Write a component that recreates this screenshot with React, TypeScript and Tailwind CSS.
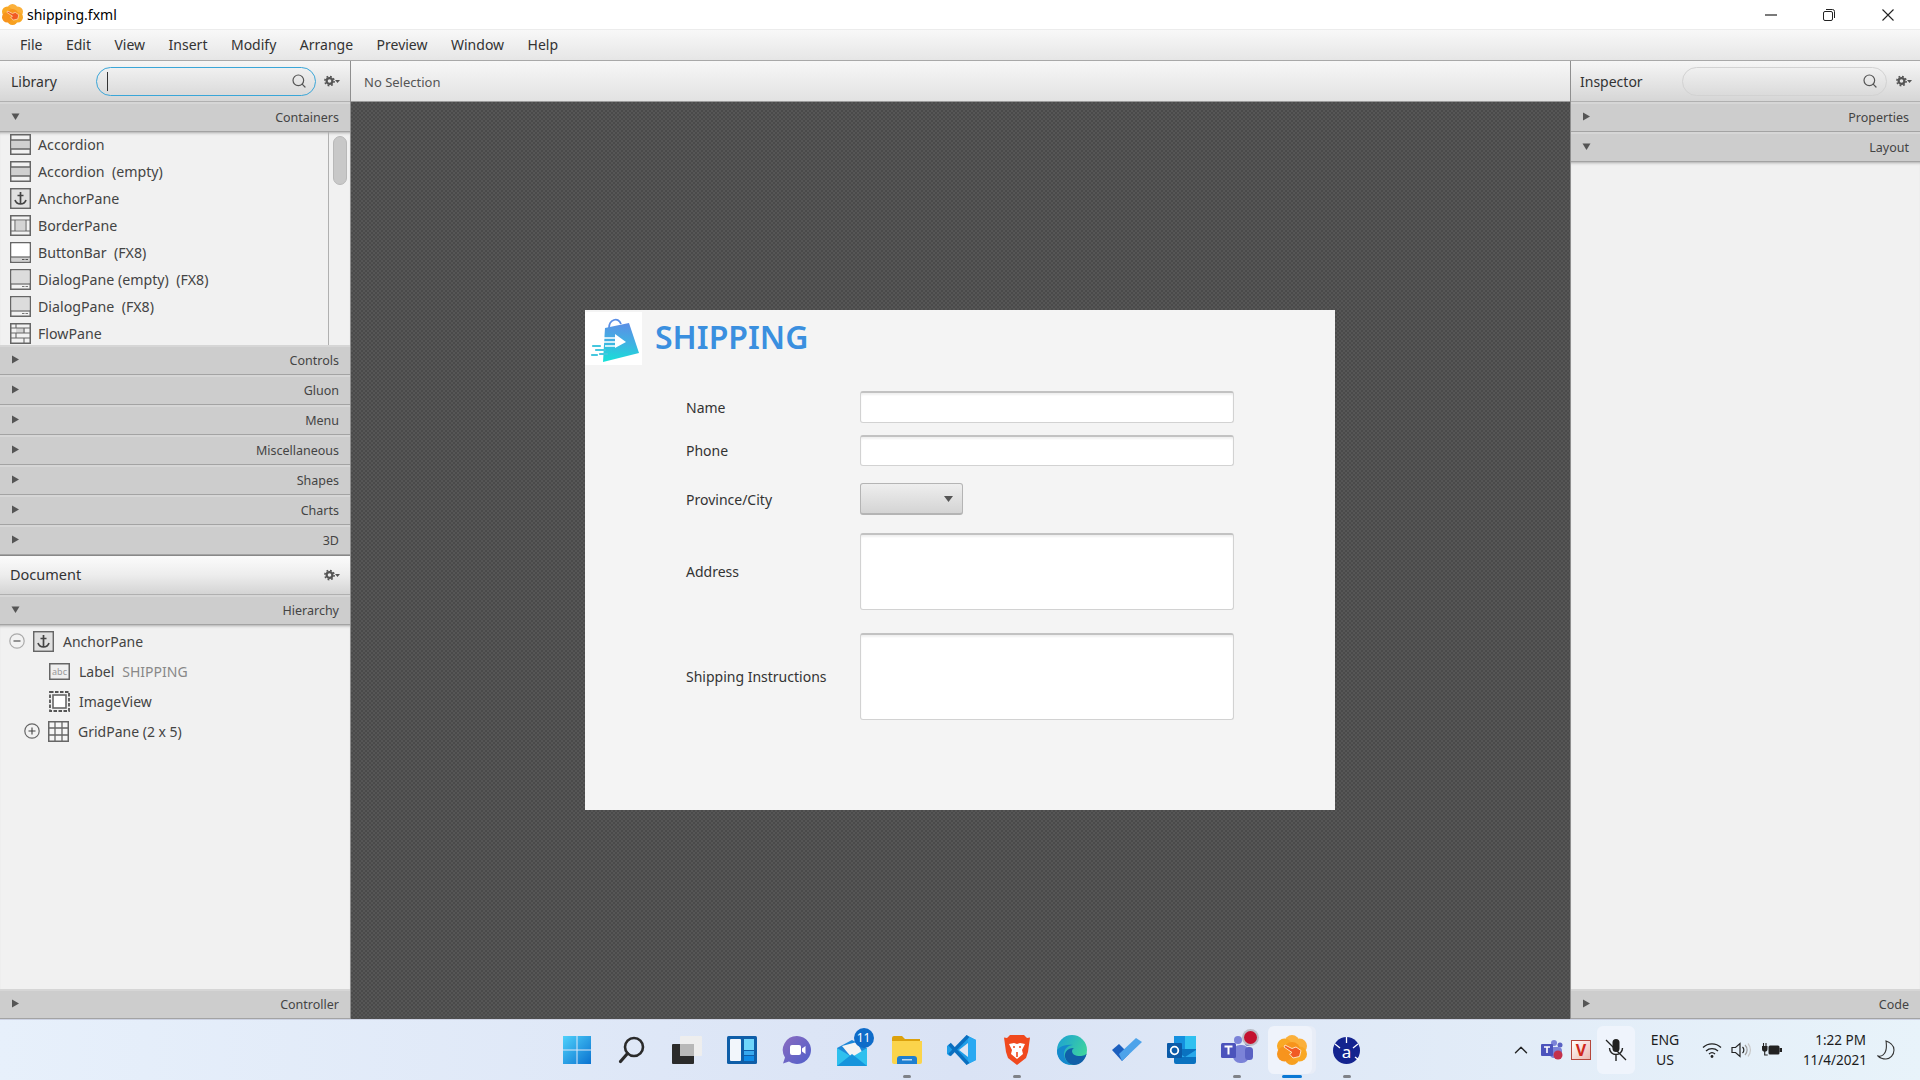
import React from "react";
import { ChevronUp, Search } from "lucide-react";

const font = "font-['Noto_Sans','Open_Sans',sans-serif]";

const Gear = () => (
  <svg width="16" height="12" viewBox="0 0 16 12" className="shrink-0">
    <circle cx="5.5" cy="6" r="2.9" fill="none" stroke="#555" strokeWidth="2.2" />
    <circle cx="5.5" cy="6" r="4.6" fill="none" stroke="#555" strokeWidth="1.6" strokeDasharray="1.8 1.8" />
    <path d="M11 5h5l-2.5 3z" fill="#555" />
  </svg>
);

const Arrow = ({ open }: { open?: boolean }) => (
  <svg width="9" height="9" viewBox="0 0 9 9" className="shrink-0">
    {open ? <path d="M0.5 1.5h8L4.5 8z" fill="#555" /> : <path d="M1 0.5v8L8 4.5z" fill="#555" />}
  </svg>
);

const Section = ({ title, open }: { title: string; open?: boolean }) => (
  <div className="h-[30px] shrink-0 flex items-center justify-between pl-[11px] pr-[11px] bg-[#cdcdcd] border-t-2 border-t-[#d6d6d6] border-b border-b-[#a3a3a3] text-[12.5px] text-[#444]">
    <div className="-mt-[2px]"><Arrow open={open} /></div>
    <span className="pt-[2px]">{title}</span>
  </div>
);

const Frame = ({ children }: { children?: React.ReactNode }) => (
  <svg width="21" height="21" viewBox="0 0 21 21" className="shrink-0">
    <rect x="0.75" y="0.75" width="19.5" height="19.5" fill="#f2f2f2" stroke="#666" strokeWidth="1.5" />
    {children}
  </svg>
);

const AccordionIcon = () => (
  <Frame>
    <rect x="1.5" y="6" width="18" height="9" fill="#d0d0d0" />
    <path d="M1 6h19M1 15h19" stroke="#666" strokeWidth="1.3" />
  </Frame>
);
const AnchorIcon = () => (
  <Frame>
    <rect x="2" y="2" width="17" height="17" fill="#e0e0e0" />
    <path d="M10.5 4v12M7.5 7.5h6M5 12c1 3 3 4 5.5 4s4.5-1 5.5-4" fill="none" stroke="#444" strokeWidth="1.7" />
  </Frame>
);
const BorderIcon = () => (
  <Frame>
    <rect x="6" y="6" width="9" height="9" fill="#d4d4d4" />
    <path d="M1 5h19M1 16h19M5 5v11M16 5v11" stroke="#666" strokeWidth="1.1" />
  </Frame>
);
const ButtonBarIcon = () => (
  <Frame>
    <rect x="1.5" y="1.5" width="18" height="13" fill="#fff" />
    <rect x="1.5" y="15" width="18" height="4.5" fill="#d0d0d0" />
    <path d="M1 15h19" stroke="#666" strokeWidth="1.2" />
    <path d="M12 17.5h2.5M15.5 17.5H18" stroke="#555" strokeWidth="1.2" />
  </Frame>
);
const DialogIcon = () => (
  <Frame>
    <rect x="1.5" y="1.5" width="18" height="13" fill="#dcdcdc" />
    <path d="M1 15h19" stroke="#666" strokeWidth="1.2" />
    <path d="M12 17.5h2.5M15.5 17.5H18" stroke="#777" strokeWidth="1.2" />
  </Frame>
);
const FlowIcon = () => (
  <Frame>
    <rect x="6" y="5" width="9" height="5" fill="#d4d4d4" />
    <path d="M1 5h19M1 10h19M1 15h19M6 1v4M14 5v5M6 10v5M14 15v5" stroke="#666" strokeWidth="1.1" />
  </Frame>
);

const libraryItems: [React.ReactNode, string][] = [
  [<AccordionIcon />, "Accordion"],
  [<AccordionIcon />, "Accordion\u00a0\u00a0(empty)"],
  [<AnchorIcon />, "AnchorPane"],
  [<BorderIcon />, "BorderPane"],
  [<ButtonBarIcon />, "ButtonBar\u00a0\u00a0(FX8)"],
  [<DialogIcon />, "DialogPane (empty)\u00a0\u00a0(FX8)"],
  [<DialogIcon />, "DialogPane\u00a0\u00a0(FX8)"],
  [<FlowIcon />, "FlowPane"],
];

const LabelIcon = () => (
  <svg width="21" height="17" viewBox="0 0 21 17" className="shrink-0">
    <rect x="0.75" y="0.75" width="19.5" height="15.5" fill="#efefef" stroke="#666" strokeWidth="1.5" />
    <text x="10.5" y="12" textAnchor="middle" fontSize="9" fill="#999" fontFamily="Noto Sans">abc</text>
  </svg>
);
const ImageIcon = () => (
  <svg width="21" height="21" viewBox="0 0 21 21" className="shrink-0">
    <rect x="1" y="1" width="19" height="19" fill="none" stroke="#555" strokeWidth="1.8" strokeDasharray="3.5 1.5" />
    <rect x="4" y="4" width="13" height="13" fill="#fff" stroke="#666" strokeWidth="1.6" />
  </svg>
);
const GridIcon = () => (
  <svg width="21" height="21" viewBox="0 0 21 21" className="shrink-0">
    <rect x="0.75" y="0.75" width="19.5" height="19.5" fill="#f6f6f6" stroke="#666" strokeWidth="1.5" />
    <path d="M7 1v19M14 1v19M1 7h19M1 14h19" stroke="#666" strokeWidth="1.3" />
  </svg>
);
const TreeToggle = ({ plus }: { plus?: boolean }) => (
  <svg width="16" height="16" viewBox="0 0 16 16" className="shrink-0">
    <circle cx="8" cy="8" r="7.2" fill="#f2f2f2" stroke={plus ? "#666" : "#aaa"} strokeWidth="1.2" />
    <path d={plus ? "M4.5 8h7M8 4.5v7" : "M4.5 8h7"} stroke="#444" strokeWidth="1.1" />
  </svg>
);

const SearchField = ({ active }: { active?: boolean }) => (
  <div
    className={
      active
        ? "h-[29px] flex-1 flex items-center justify-between rounded-full border border-[#3aa6d8] pl-[10px] pr-[8px]"
        : "h-[29px] flex-1 flex items-center justify-end rounded-full border border-[#d2d2d2] pr-[8px]"
    }
  >
    {active && <div className="w-px h-[19px] bg-[#333]" />}
    <Search size={16} strokeWidth={1.8} className="text-[#555]" />
  </div>
);

const ShippingLogo = () => (
  <svg width="57" height="53" viewBox="0 0 57 53" className="shrink-0 bg-white">
    <defs>
      <linearGradient id="bag" x1="0.5" y1="0" x2="0.4" y2="1">
        <stop offset="0" stopColor="#5b8fe6" />
        <stop offset="0.5" stopColor="#3fb2e2" />
        <stop offset="1" stopColor="#17e0d8" />
      </linearGradient>
    </defs>
    <path d="M24 16C24 8 33 4 36 12" fill="none" stroke="#5b8fe6" strokeWidth="1.8" />
    <path d="M20 16L44 11L54 41L18 50Z" fill="url(#bag)" />
    <path d="M14 26H33M17 30H30M20 34H30" stroke="#fff" strokeWidth="1.6" />
    <path d="M30 22L41 30L30 36Z" fill="#fff" />
    <path d="M8 34H15M11 38H20M7 43H12M15 42H22" stroke="#45c7de" strokeWidth="2.2" strokeLinecap="round" />
  </svg>
);

const SceneBuilderIcon = ({ size }: { size: number }) => (
  <svg width={size} height={size} viewBox="0 0 30 30" className="shrink-0">
    <circle cx="15" cy="7.5" r="7.5" fill="#fbb03b" />
    <circle cx="15" cy="22.5" r="7.5" fill="#f7a020" />
    <circle cx="7.5" cy="11" r="7.5" fill="#f9a825" />
    <circle cx="22.5" cy="11" r="7.5" fill="#fbb03b" />
    <circle cx="7.5" cy="19" r="7.5" fill="#f7941d" />
    <circle cx="22.5" cy="19" r="7.5" fill="#f9a825" />
    <circle cx="15" cy="15" r="8" fill="#f7941d" />
    <path d="M8 10L15 13.5L19 12L24 15.5L22.5 21.5L16 23L12.5 19L15 17.5L7 12Z" fill="#f15a24" stroke="#fde3c0" strokeWidth="1" strokeLinejoin="round" />
  </svg>
);

const Pip = ({ active }: { active?: boolean }) => (
  <div className={active ? "absolute bottom-[2px] left-1/2 -translate-x-1/2 w-5 h-[3px] rounded-full bg-[#0a78d4]" : "absolute bottom-[2px] left-1/2 -translate-x-1/2 w-2 h-[3px] rounded-full bg-[#7f8288]"} />
);

const TaskItem = ({ children, running, active }: { children: React.ReactNode; running?: boolean; active?: boolean }) => (
  <div className="relative w-[55px] h-[60px] flex items-center justify-center">
    {active && <div className="absolute left-[4px] top-[6px] w-[44px] h-[48px] rounded-md bg-[#eff3fb] shadow-[4px_0_0_#e8edf7]" />}
    <div className="relative flex items-center justify-center">{children}</div>
    {running && <Pip active={active} />}
  </div>
);

const taskIcons: { icon: React.ReactNode; running?: boolean; active?: boolean }[] = [
  {
    icon: (
      <svg width="30" height="30" viewBox="0 0 30 30">
        <defs>
          <linearGradient id="win" x1="0" y1="0" x2="1" y2="1">
            <stop offset="0" stopColor="#4fd1fb" />
            <stop offset="1" stopColor="#0a72d0" />
          </linearGradient>
        </defs>
        <path d="M1 1h13.5v13.5H1zM15.5 1H29v13.5H15.5zM1 15.5h13.5V29H1zM15.5 15.5H29V29H15.5z" fill="url(#win)" />
      </svg>
    ),
  },
  {
    icon: (
      <svg width="28" height="28" viewBox="0 0 28 28" fill="none">
        <circle cx="16" cy="11" r="9" stroke="#2a2a2a" strokeWidth="2.6" />
        <path d="M9.5 17.5L2.5 25.5" stroke="#2a2a2a" strokeWidth="3.2" strokeLinecap="round" />
      </svg>
    ),
  },
  {
    icon: (
      <svg width="30" height="28" viewBox="0 0 30 28">
        <rect x="8" y="0" width="22" height="20" rx="1" fill="#eeeeee" />
        <rect x="0" y="8" width="22" height="20" rx="1" fill="#2b2b2b" />
        <rect x="8" y="8" width="14" height="12" fill="#b8b8b8" />
      </svg>
    ),
  },
  {
    icon: (
      <svg width="30" height="28" viewBox="0 0 30 28">
        <rect width="30" height="28" rx="1.5" fill="#0f5ea8" />
        <rect x="3" y="3" width="11" height="22" rx="1" fill="#f2f6fb" />
        <rect x="17" y="3" width="10" height="11" fill="#6fd6fb" />
        <rect x="17" y="15" width="10" height="4" fill="#38a9ee" />
        <rect x="17" y="20" width="10" height="5" fill="#0f8be6" />
      </svg>
    ),
  },
  {
    icon: (
      <svg width="30" height="30" viewBox="0 0 30 30">
        <defs>
          <linearGradient id="chat" x1="0" y1="0" x2="1" y2="1">
            <stop offset="0" stopColor="#8c6cc0" />
            <stop offset="1" stopColor="#4f5fca" />
          </linearGradient>
        </defs>
        <path d="M15 1a14 14 0 1 1-8 25.5L1 28.5l2-6A14 14 0 0 1 15 1z" fill="url(#chat)" />
        <rect x="8" y="10" width="11" height="10" rx="2" fill="#fff" />
        <path d="M20 13.5l3.5-2.5v8L20 16.5z" fill="#fff" />
      </svg>
    ),
  },
  {
    icon: (
      <div className="relative w-[30px] h-[26px] mt-[6px]">
        <svg width="30" height="26" viewBox="0 0 30 26">
          <path d="M0 8L15 0L30 8V26H0Z" fill="#1e88d8" />
          <path d="M5 6L20 2L25 12L15 18Z" fill="#f4f4f4" />
          <path d="M0 8L15 17L30 8V26H0Z" fill="#2fc0ee" />
          <path d="M0 26L15 14L30 26Z" fill="#1694dc" />
        </svg>
        <div className="absolute -top-[12px] left-[17px] w-5 h-5 rounded-full bg-[#0f6cc9] text-white text-[12px] leading-5 text-center">11</div>
      </div>
    ),
  },
  {
    icon: (
      <svg width="30" height="28" viewBox="0 0 30 28">
        <path d="M0 2a2 2 0 0 1 2-2h8l3 3h15v6H0z" fill="#dca10c" />
        <path d="M0 5h30v21a2 2 0 0 1-2 2H2a2 2 0 0 1-2-2z" fill="#fbd44b" />
        <path d="M5 28v-5a3 3 0 0 1 3-3h14a3 3 0 0 1 3 3v5z" fill="#1f7fd0" />
        <rect x="10" y="23" width="10" height="1.5" fill="#fff" opacity="0.7" />
      </svg>
    ),
    running: true,
  },
  {
    icon: (
      <svg width="30" height="30" viewBox="0 0 30 30">
        <path d="M21 1L29 5V25L21 29L8 16.5L2.5 21L0 19V11L2.5 9L8 13.5Z" fill="#1f9ee8" />
        <path d="M21 8L12 15L21 22Z" fill="#dfe6f4" />
        <path d="M21 1L29 5V25L21 29Z" fill="#2aa9f2" />
        <path d="M21 1L2.5 20" stroke="#0a6fc0" strokeWidth="3.5" />
        <path d="M2.5 9L21 29" stroke="#0a6fc0" strokeWidth="3.5" />
      </svg>
    ),
  },
  {
    icon: (
      <svg width="26" height="30" viewBox="0 0 26 30">
        <path d="M6 0h14l3 3 3-.5L24 17l-2 6-9 7-9-7-2-6L0 2.5 3 3z" fill="#f0491e" />
        <path d="M5 9l5-1 3 1 3-1 5 1-3 6 1 4-6 5-6-5 1-4z" fill="#fff" />
        <path d="M13 17v5M9 12h2M15 12h2" stroke="#f0491e" strokeWidth="1.6" />
      </svg>
    ),
    running: true,
  },
  {
    icon: (
      <svg width="30" height="30" viewBox="0 0 30 30">
        <defs>
          <linearGradient id="edgeA" x1="0" y1="0" x2="1" y2="0.6">
            <stop offset="0" stopColor="#1b9fd6" />
            <stop offset="1" stopColor="#3fd69c" />
          </linearGradient>
        </defs>
        <circle cx="15" cy="15" r="15" fill="url(#edgeA)" />
        <path d="M30 17c0 3-4 4-7 4-5 0-8-2-8-5 0-2 2-3 2-3-7 0-10 5-9 9s4 8 9 8c7 0 12-6 13-13z" fill="#105fa8" />
        <path d="M16 10c-5 0-9 4-9 9 0 5 4 9 8 11C6 30 0 24 0 16 0 14 5 9 16 10z" fill="#1589cd" />
      </svg>
    ),
  },
  {
    icon: (
      <svg width="30" height="24" viewBox="0 0 30 24">
        <path d="M0 12l7-6 10 10-7 7z" fill="#1c5fbf" />
        <path d="M10 23L30 4 24 0 7 16z" fill="#4da3ea" />
      </svg>
    ),
  },
  {
    icon: (
      <svg width="30" height="28" viewBox="0 0 30 28">
        <rect x="7" y="0" width="22" height="14" fill="#1490df" />
        <rect x="18" y="0" width="11" height="14" fill="#2fc0f0" />
        <path d="M7 13h22v13a2 2 0 0 1-2 2H9a2 2 0 0 1-2-2z" fill="#0a72c0" />
        <path d="M7 14l11 7 11-7v7H7z" fill="#28a8ea" />
        <rect x="0" y="7" width="15" height="15" rx="1" fill="#0a5aa8" />
        <circle cx="7.5" cy="14.5" r="3.8" fill="none" stroke="#fff" strokeWidth="1.8" />
      </svg>
    ),
  },
  {
    icon: (
      <div className="relative w-[32px] h-[28px]">
        <svg width="32" height="28" viewBox="0 0 32 28">
          <circle cx="17" cy="4" r="4" fill="#7b83d8" />
          <rect x="12" y="9" width="16" height="18" rx="7" fill="#7b83d8" />
          <circle cx="27" cy="7" r="3" fill="#5a62c3" />
          <rect x="24" y="11" width="8" height="13" rx="3.5" fill="#5a62c3" />
          <rect x="0" y="7" width="15" height="15" rx="1.5" fill="#4b53bc" />
          <path d="M3.5 10.5h8M7.5 10.5v8" stroke="#fff" strokeWidth="2" />
        </svg>
        <div className="absolute -top-[5px] right-[-4px] w-[13px] h-[13px] rounded-full bg-[#c4122f] ring-2 ring-[#b9bcc4]" />
      </div>
    ),
    running: true,
  },
  { icon: <SceneBuilderIcon size={30} />, running: true, active: true },
  {
    icon: (
      <svg width="27" height="27" viewBox="0 0 27 27">
        <circle cx="13.5" cy="13.5" r="13.5" fill="#14248f" />
        <path d="M13.5 0v6M2 7l5 4M25 7l-5 4M22 20l4 3" stroke="#fff" strokeWidth="1.3" />
        <text x="13.5" y="21" textAnchor="middle" fontSize="17" fill="#fff" fontFamily="Noto Sans">a</text>
      </svg>
    ),
    running: true,
  },
];

const Tray = () => (
  <div className="ml-auto flex items-center text-[14px] text-[#1c1c1c]">
    <ChevronUp size={22} strokeWidth={1.5} className="text-[#222]" />
    <svg width="22" height="20" viewBox="0 0 22 20" className="ml-[9px]">
      <circle cx="13" cy="3" r="3" fill="#7b83d8" />
      <circle cx="19" cy="5" r="2.5" fill="#5a62c3" />
      <rect x="9" y="7" width="12" height="11" rx="4" fill="#7b83d8" />
      <rect x="0" y="4" width="12" height="12" rx="1" fill="#4b53bc" />
      <path d="M3 7h6M6 7v6" stroke="#fff" strokeWidth="1.6" />
      <circle cx="17" cy="15" r="4.5" fill="#c4314b" />
    </svg>
    <div className="ml-[8px] w-5 h-5 flex items-center justify-center border border-[#b5473c] bg-gradient-to-br from-[#fff] to-[#e9b9b0] text-[#d0281c] text-[16px] font-bold leading-none">V</div>
    <div className="ml-[6px] w-[38px] h-[48px] rounded-md bg-[#eff4fc] flex items-center justify-center">
      <svg width="22" height="24" viewBox="0 0 22 24" fill="none">
        <rect x="7.5" y="1" width="7" height="13" rx="3.5" fill="#222" />
        <path d="M4.5 10c0 4 3 6.5 6.5 6.5s6.5-2.5 6.5-6.5M11 17v6" stroke="#222" strokeWidth="1.4" />
        <path d="M1 2l20 20" stroke="#222" strokeWidth="1.3" />
      </svg>
    </div>
    <div className="ml-[11px] w-[38px] text-center leading-[20px] text-[14px]">
      <div>ENG</div>
      <div>US</div>
    </div>
    <svg width="20" height="16" viewBox="0 0 20 16" fill="none" className="ml-[18px]">
      <path d="M1 5.5a13 13 0 0 1 18 0M4 9a9 9 0 0 1 12 0M7 12a4.5 4.5 0 0 1 6 0" stroke="#222" strokeWidth="1.3" />
      <circle cx="10" cy="14.5" r="1.4" fill="#222" />
    </svg>
    <svg width="20" height="16" viewBox="0 0 20 16" fill="none" className="ml-[9px]">
      <path d="M1 5.5h3.5L9 1.5v13L4.5 10.5H1z" stroke="#222" strokeWidth="1.2" />
      <path d="M11.5 5a4 4 0 0 1 0 6" stroke="#222" strokeWidth="1.2" />
      <path d="M14 3a7 7 0 0 1 0 10" stroke="#999" strokeWidth="1.2" />
      <path d="M17 1.5a10 10 0 0 1 0 13" stroke="#c8c8c8" strokeWidth="1.2" />
    </svg>
    <svg width="20" height="16" viewBox="0 0 20 16" className="ml-[11px]">
      <path d="M1.5 1v3M4 1v3" stroke="#222" strokeWidth="1.1" />
      <path d="M0 4h5.5v3a2.7 2.7 0 0 1-5.500 0z" fill="#222" />
      <path d="M2.7 9v4h3" stroke="#222" strokeWidth="1.1" fill="none" />
      <rect x="6.5" y="3.5" width="11" height="9" rx="1.5" fill="#222" />
      <rect x="17.5" y="6" width="2.5" height="4" fill="#222" />
    </svg>
    <div className="ml-[9px] w-[76px] text-right leading-[20px] text-[13.5px]">
      <div className="pr-[1px]">1:22 PM</div>
      <div>11/4/2021</div>
    </div>
    <svg width="18" height="20" viewBox="0 0 18 20" fill="none" className="ml-[10px] mr-[25px]">
      <path d="M9 1c3 1 8 4 8 9s-4 9-8 9c-3 0-6-1-8-3 4 1 7-2 8-6 .6-3 .5-6 0-9z" stroke="#333" strokeWidth="1.1" />
    </svg>
  </div>
);

const Field = ({ label, rowClass, children }: { label: string; rowClass: string; children: React.ReactNode }) => (
  <div className={`flex items-center ${rowClass}`}>
    <span className="w-[174px] text-[14px] text-[#333]">{label}</span>
    {children}
  </div>
);

const inputClass =
  "w-[374px] rounded-[3px] bg-white border border-[#d2d2d2] border-t-2 border-t-[#c2c2c2] shadow-[inset_0_2px_2px_#f0f0f0]";

export default function App() {
  return (
    <div className={`w-[1920px] h-[1080px] flex flex-col overflow-hidden bg-white ${font}`}>
      {/* title bar */}
      <div className="h-[29px] shrink-0 flex items-center bg-white pl-[2px]">
        <SceneBuilderIcon size={21} />
        <span className="ml-[4px] text-[14px] text-black">shipping.fxml</span>
        <div className="ml-auto flex items-center">
          <svg width="12" height="2" viewBox="0 0 12 2" className="mr-[46px]"><path d="M0 1h12" stroke="#222" strokeWidth="1.2" /></svg>
          <svg width="12" height="12" viewBox="0 0 12 12" fill="none" className="mr-[47px]">
            <rect x="0.5" y="2.5" width="9" height="9" rx="1.5" stroke="#222" />
            <path d="M3 0.5h6.5a2 2 0 0 1 2 2V9" stroke="#222" />
          </svg>
          <svg width="12" height="12" viewBox="0 0 12 12" className="mr-[26px]"><path d="M0.5 0.5l11 11M11.500 0.5l-11 11" stroke="#222" strokeWidth="1.1" /></svg>
        </div>
      </div>

      {/* menu bar */}
      <div className="h-[32px] shrink-0 flex items-center gap-[23.5px] pl-5 pb-[2px] border-t border-[#ececec] border-b border-b-[#a8a8a8] bg-gradient-to-b from-[#f8f8f8] to-[#e6e6e6] text-[14px] text-[#333]">
        {["File", "Edit", "View", "Insert", "Modify", "Arrange", "Preview", "Window", "Help"].map((m) => (
          <span key={m}>{m}</span>
        ))}
      </div>

      {/* main */}
      <div className="flex-1 min-h-0 flex">
        {/* left column */}
        <div className="w-[351px] shrink-0 flex flex-col bg-[#f1f1f1] border-r border-[#8f8f8f]">
          <div className="h-[41px] shrink-0 flex items-center pl-[11px] pr-[10px] bg-gradient-to-b from-[#f6f6f6] to-[#d6d6d6] border-b border-[#b0b0b0]">
            <span className="w-[85px] text-[14px] text-[#333]">Library</span>
            <SearchField active />
            <div className="ml-[8px]"><Gear /></div>
          </div>
          <Section title="Containers" open />
          <div className="h-[213px] shrink-0 flex overflow-hidden shadow-[inset_0_3px_3px_-2px_#aaaaaa]">
            <div className="flex-1 border-r border-[#b0b0b0]">
              <div className="-mt-px">
                {libraryItems.map(([icon, name], i) => (
                  <div key={i} className="h-[27px] flex items-center pl-[10px] gap-[7px] text-[14.2px] text-[#444] whitespace-pre">
                    {icon}
                    <span>{name}</span>
                  </div>
                ))}
              </div>
            </div>
            <div className="w-[21px] shrink-0 pl-1 pt-1">
              <div className="w-[14px] h-[49px] rounded-full bg-[#c8c8c8] border border-[#b8b8b8]" />
            </div>
          </div>
          {["Controls", "Gluon", "Menu", "Miscellaneous", "Shapes", "Charts", "3D"].map((s) => (
            <Section key={s} title={s} />
          ))}
          <div className="h-[40px] shrink-0 flex items-center justify-between pl-[10px] pr-[10px] bg-gradient-to-b from-[#fbfbfb] via-[#ededed] to-[#d4d4d4] border-t border-[#888] border-b border-b-[#b0b0b0] text-[14.5px] text-[#333]">
            <span>Document</span>
            <Gear />
          </div>
          <Section title="Hierarchy" open />
          <div className="flex-1 min-h-0 pt-px text-[14px] text-[#444] shadow-[inset_0_3px_3px_-2px_#aaaaaa]">
            <div className="h-[30px] flex items-center pl-[9px]">
              <TreeToggle />
              <div className="ml-[8px]"><AnchorIcon /></div>
              <span className="ml-[9px]">AnchorPane</span>
            </div>
            <div className="h-[30px] flex items-center pl-[49px]">
              <LabelIcon />
              <span className="ml-[9px]">Label</span>
              <span className="ml-[8px] text-[#888]">SHIPPING</span>
            </div>
            <div className="h-[30px] flex items-center pl-[49px]">
              <ImageIcon />
              <span className="ml-[9px]">ImageView</span>
            </div>
            <div className="h-[30px] flex items-center pl-[24px]">
              <TreeToggle plus />
              <div className="ml-[8px]"><GridIcon /></div>
              <span className="ml-[9px]">GridPane (2 x 5)</span>
            </div>
          </div>
          <Section title="Controller" />
        </div>

        {/* center */}
        <div className="flex-1 min-w-0 flex flex-col">
          <div className="h-[41px] shrink-0 flex items-center pl-[13px] pt-[3px] bg-gradient-to-b from-[#f7f7f7] to-[#e2e2e2] border-b border-[#9a9a9a] text-[13px] text-[#555]">
            No Selection
          </div>
          <div className="flex-1 min-h-0 flex items-center justify-center pr-px pb-px bg-[repeating-conic-gradient(#4a4a4a_0_25%,#565656_0_50%)] bg-[length:4px_4px]">
            <div className="w-[750px] h-[500px] bg-[#f4f4f4]">
              <div className="flex items-center pt-[2px]">
                <ShippingLogo />
                <span className="ml-[13px] pb-[3px] text-[32px] leading-none font-semibold text-[#3a8fdf]">SHIPPING</span>
              </div>
              <div className="pl-[101px] pt-[26px]">
                <Field label="Name" rowClass="h-[32px]">
                  <div className={`${inputClass} h-[32px]`} />
                </Field>
                <Field label="Phone" rowClass="h-[31px] mt-[12px]">
                  <div className={`${inputClass} h-[31px]`} />
                </Field>
                <Field label="Province/City" rowClass="h-[32px] mt-[17px]">
                  <div className="w-[103px] h-[32px] flex items-center justify-end pr-[9px] rounded-[3px] border border-[#b4b4b4] border-b-2 bg-gradient-to-b from-[#eeeeee] to-[#d4d4d4]">
                    <svg width="9" height="6" viewBox="0 0 9 6"><path d="M0 0h9L4.5 6z" fill="#555" /></svg>
                  </div>
                </Field>
                <Field label="Address" rowClass="h-[77px] mt-[18px]">
                  <div className={`${inputClass} h-[77px]`} />
                </Field>
                <Field label="Shipping Instructions" rowClass="h-[87px] mt-[23px]">
                  <div className={`${inputClass} h-[87px]`} />
                </Field>
              </div>
            </div>
          </div>
        </div>

        {/* right column */}
        <div className="w-[350px] shrink-0 flex flex-col bg-[#f1f1f1] border-l border-[#8f8f8f]">
          <div className="h-[41px] shrink-0 flex items-center pl-[9px] pr-[8px] bg-gradient-to-b from-[#f6f6f6] to-[#d6d6d6] border-b border-[#b0b0b0]">
            <span className="w-[102px] text-[14px] text-[#333]">Inspector</span>
            <SearchField />
            <div className="ml-[9px]"><Gear /></div>
          </div>
          <Section title="Properties" />
          <Section title="Layout" open />
          <div className="flex-1 min-h-0 shadow-[inset_0_3px_3px_-2px_#aaaaaa]" />
          <Section title="Code" />
        </div>
      </div>

      {/* taskbar */}
      <div className="h-[61px] shrink-0 flex items-center pl-[549px] border-t border-[#cdd3e4] bg-gradient-to-r from-[#e7f0fb] via-[#dae3f5] to-[#e8f3fa]">
        {taskIcons.map((t, i) => (
          <TaskItem key={i} running={t.running} active={t.active}>
            {t.icon}
          </TaskItem>
        ))}
        <Tray />
      </div>
    </div>
  );
}
